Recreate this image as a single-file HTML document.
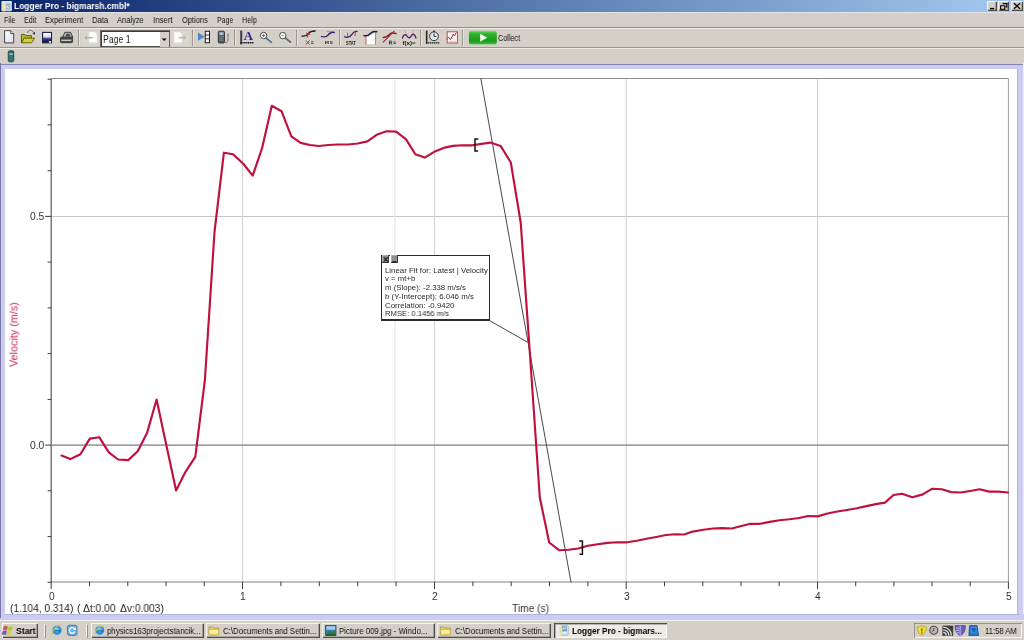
<!DOCTYPE html>
<html><head><meta charset="utf-8"><title>Logger Pro - bigmarsh.cmbl*</title>
<style>
html,body{margin:0;padding:0;overflow:hidden;}
body{width:1024px;height:640px;overflow:hidden;background:#d4d0c8;position:relative;font-family:"Liberation Sans",sans-serif;}
.abs{position:absolute;}
.t{position:absolute;white-space:nowrap;transform-origin:0 50%;line-height:normal;will-change:transform;}
.sep{position:absolute;width:1px;background:#9c988f;box-shadow:1px 0 0 #e6e3dc;}
.tb{position:absolute;top:623px;height:15px;background:#d4d0c8;box-shadow:inset 0.8px 0.8px 0 #fff,inset -0.8px -0.8px 0 #404040,inset -1.6px -1.6px 0 #808080;}
.cb{position:absolute;top:1.3px;height:9.8px;background:#d4d0c8;box-shadow:inset 0.8px 0.8px 0 #fff,inset -0.8px -0.8px 0 #404040,inset -1.6px -1.6px 0 #808080;}
</style></head><body>

<div class="abs" style="left:0;top:0;width:1024px;height:12.4px;background:linear-gradient(90deg,#0a246a,#a6caf0);"></div>
<div class="abs" style="left:0;top:12.4px;width:1024px;height:1.1px;background:#e2e1e6;"></div>
<svg class="abs" style="left:0;top:0" width="14" height="13" viewBox="0 0 14 13"><rect x="1.6" y="1.1" width="10.3" height="10.2" rx="0.8" fill="#c9d9ea"/><rect x="1.6" y="1.1" width="3.6" height="10.2" rx="0.6" fill="#e6e3c2"/><rect x="5.6" y="1.3" width="5.8" height="1.6" fill="#d6ecf8"/><path d="M6 4.2h4.6M6.4 6.2l1.4-1.6 1.4 2.6 1.4-1.2M6 8.8h4" stroke="#8fa3bd" stroke-width="0.9" fill="none"/></svg>
<span class="t" style="left:13.70px;top:-4.00px;font-size:8.9px;line-height:20px;color:#fff;font-weight:bold;transform:scaleX(0.9497);">Logger Pro - bigmarsh.cmbl*</span>
<div class="cb" style="left:987.2px;width:10px;"></div><div class="cb" style="left:997.6px;width:11.6px;"></div><div class="cb" style="left:1011.2px;width:11.4px;"></div>
<svg class="abs" style="left:985px;top:0" width="39" height="13" viewBox="985 0 39 13"><path d="M990 8.6h4.2" stroke="#000" stroke-width="1.4"/><path d="M1002.6 3.6h4.2v3.4h-1.2M1000.6 5.8h4.2v3.4h-4.2z" fill="none" stroke="#000" stroke-width="1.1"/><path d="M1014 3.2l6 5.6M1020 3.2l-6 5.6" stroke="#000" stroke-width="1.3"/></svg>
<span class="t" style="left:3.80px;top:10.00px;font-size:8.7px;line-height:20px;color:#111;transform:scaleX(0.7989);">File</span>
<span class="t" style="left:23.80px;top:10.00px;font-size:8.7px;line-height:20px;color:#111;transform:scaleX(0.8271);">Edit</span>
<span class="t" style="left:44.80px;top:10.00px;font-size:8.7px;line-height:20px;color:#111;transform:scaleX(0.8704);">Experiment</span>
<span class="t" style="left:91.90px;top:10.00px;font-size:8.7px;line-height:20px;color:#111;transform:scaleX(0.8815);">Data</span>
<span class="t" style="left:117.00px;top:10.00px;font-size:8.7px;line-height:20px;color:#111;transform:scaleX(0.8626);">Analyze</span>
<span class="t" style="left:152.90px;top:10.00px;font-size:8.7px;line-height:20px;color:#111;transform:scaleX(0.9008);">Insert</span>
<span class="t" style="left:182.00px;top:10.00px;font-size:8.7px;line-height:20px;color:#111;transform:scaleX(0.8638);">Options</span>
<span class="t" style="left:216.70px;top:10.00px;font-size:8.7px;line-height:20px;color:#111;transform:scaleX(0.8022);">Page</span>
<span class="t" style="left:242.00px;top:10.00px;font-size:8.7px;line-height:20px;color:#111;transform:scaleX(0.8383);">Help</span>
<div class="abs" style="left:0;top:27px;width:1024px;height:1px;background:#8f8b82;"></div><div class="abs" style="left:0;top:28px;width:1024px;height:1px;background:#f2f0ea;"></div>
<div class="abs" style="left:0;top:47px;width:1024px;height:1px;background:#9b978e;"></div><div class="abs" style="left:0;top:48px;width:1024px;height:1px;background:#efede6;"></div>
<div class="sep" style="left:78.0px;top:30px;height:15.6px;"></div>
<div class="sep" style="left:191.8px;top:30px;height:15.6px;"></div>
<div class="sep" style="left:234.0px;top:30px;height:15.6px;"></div>
<div class="sep" style="left:295.9px;top:30px;height:15.6px;"></div>
<div class="sep" style="left:339.4px;top:30px;height:15.6px;"></div>
<div class="sep" style="left:419.9px;top:30px;height:15.6px;"></div>
<div class="sep" style="left:461.8px;top:30px;height:15.6px;"></div>
<div class="abs" style="left:100.3px;top:30px;width:69.6px;height:17.4px;background:#fff;box-shadow:inset 1px 1px 0 #6d6a63,inset -0.9px -0.9px 0 #55524c,inset 2px 2px 0 #3d3b38;"></div>
<div class="abs" style="left:159.7px;top:32px;width:9.2px;height:14.5px;background:#d4d0c8;"></div>
<svg class="abs" style="left:160px;top:36px" width="9" height="6" viewBox="0 0 9 6"><path d="M1.7 2.4h5L4.2 4.9z" fill="#000"/></svg>
<span class="t" style="left:102.90px;top:29.00px;font-size:10.4px;line-height:21px;color:#222;transform:scaleX(0.8343);">Page 1</span>
<span class="t" style="left:498.30px;top:28.00px;font-size:8.7px;line-height:20px;color:#111;transform:scaleX(0.8273);">Collect</span>
<svg class="abs" style="left:0;top:26px" width="540" height="38" viewBox="0 26 540 38"><defs><linearGradient id="gs" x1="0" y1="0" x2="0" y2="1"><stop offset="0" stop-color="#fff"/><stop offset="0.42" stop-color="#dcdcf0"/><stop offset="0.62" stop-color="#3a3a78"/><stop offset="0.85" stop-color="#16164e"/><stop offset="1" stop-color="#101040"/></linearGradient><linearGradient id="gg" x1="0" y1="0" x2="0" y2="1"><stop offset="0" stop-color="#58d058"/><stop offset="0.25" stop-color="#2cb02c"/><stop offset="0.75" stop-color="#1c9a1c"/><stop offset="1" stop-color="#3cbc3c"/></linearGradient><linearGradient id="gd" x1="0" y1="0" x2="1" y2="1"><stop offset="0" stop-color="#fff"/><stop offset="1" stop-color="#d8dcec"/></linearGradient></defs><path d="M4.6 30.7h6.2l2.9 2.9v9.3H4.6z" fill="url(#gd)" stroke="#44444e" stroke-width="1"/><path d="M10.8 30.7v2.9h2.9" fill="#ececec" stroke="#3a3a44" stroke-width="0.9"/><path d="M21.4 42.8v-8.4h3.4l1 1.2h5.6v2.6" fill="#b4b424" stroke="#56560a" stroke-width="0.9"/><path d="M21.4 42.8l2.9-4.6h10.4l-3.2 4.6z" fill="#d2d234" stroke="#56560a" stroke-width="0.9"/><path d="M27.4 32.8c0.9-2.8 3.9-3.6 5.9-0.6" fill="none" stroke="#666" stroke-width="0.9"/><path d="M32.3 33.6l2.7 1.1 0-3z" fill="#333"/><rect x="42.6" y="32.4" width="8.9" height="10.4" fill="url(#gs)" stroke="#1e1e48" stroke-width="1.1"/><rect x="48.9" y="41" width="2.2" height="1.7" fill="#ececf4"/><path d="M62.6 37.6l2.2-5.3h5.8l2.2 5z" fill="#bdbdbd" stroke="#2e2e2e" stroke-width="0.9"/><path d="M65.3 36.2l1-2.5h3.3l1 2.5z" fill="#4e4e4e"/><rect x="60.4" y="37" width="12.2" height="5.7" rx="1.3" fill="#474747" stroke="#262626" stroke-width="0.7"/><rect x="61.2" y="39.7" width="10.2" height="1.1" fill="#e9e9e4"/><rect x="81" y="30.4" width="18" height="15" fill="#d9d6ce"/><path d="M89 32h5.6l2.4 2.4v8.4H89z" fill="#fdfdfd" stroke="#e4e2dc" stroke-width="0.6"/><path d="M84 37.7l2.8-2.2v1.4h6v1.6h-6v1.4z" fill="#b4b1aa"/><rect x="172" y="30.4" width="18" height="15" fill="#d9d6ce"/><path d="M174.2 32h5.4l2.4 2.4v8.4h-7.8z" fill="#fdfdfd" stroke="#e4e2dc" stroke-width="0.6"/><path d="M186.6 37.7l-2.8-2.4v1.5h-5v1.8h5v1.5z" fill="#bebbb4"/><path d="M198 32.6l6.6 4.1-6.6 4.1z" fill="#4a86c8"/><rect x="205.3" y="31.3" width="4.2" height="11.4" fill="#fff" stroke="#1a1a1a" stroke-width="1"/><path d="M205.3 35h4.2M205.3 38.8h4.2" stroke="#1a1a1a" stroke-width="0.9"/><rect x="218.3" y="31.2" width="6.2" height="11.8" rx="1.2" fill="#5a5e64" stroke="#2c2e32" stroke-width="0.9"/><rect x="219.4" y="32.3" width="4" height="2.6" fill="#a8cce4"/><path d="M219.4 36.6h4M219.4 38.4h4M219.4 40.2h4" stroke="#8a8e94" stroke-width="0.7"/><path d="M224.6 42.4c2.4 0.6 3.4-0.4 3.4-2.4v-5.6" fill="none" stroke="#6a6a6a" stroke-width="0.8"/><rect x="227.4" y="33.6" width="1.3" height="2.6" fill="#888"/><path d="M241 30.4v14" stroke="#1a1a2a" stroke-width="1.3"/><path d="M241 32h1.6M241 34h1.6M241 36h1.6M241 38h1.6M241 40h1.6" stroke="#1a1a2a" stroke-width="0.7"/><path d="M240.4 42.8h13.6" stroke="#1a1a2a" stroke-width="1.4" stroke-dasharray="1.4 0.5"/><text x="243.8" y="40.2" font-family="Liberation Serif" font-weight="bold" font-size="12.5" fill="#2c1c86" textLength="9.2" lengthAdjust="spacingAndGlyphs">A</text><path d="M266 38l5.4 4.4" stroke="#4a7a9a" stroke-width="1.8" stroke-linecap="round"/><circle cx="263.6" cy="35.5" r="3.2" fill="#fdf6f6" stroke="#3a3a3a" stroke-width="0.9"/><path d="M262 35.5h3.2M263.6 33.9v3.2" stroke="#b03030" stroke-width="0.8"/><path d="M285.2 38l5.2 4" stroke="#566e7e" stroke-width="1.8" stroke-linecap="round"/><circle cx="282.8" cy="35.6" r="3.2" fill="#f8f8f6" stroke="#3a3a3a" stroke-width="0.9"/><path d="M281.2 35.6h3.2" stroke="#888" stroke-width="0.8"/><path d="M301.6 36c4 0.8 5.4-0.6 7-2.6s3-2.6 7-2.4" fill="none" stroke="#1a1a2a" stroke-width="1.3"/><path d="M309.4 31.2l-2.4 6.4M306.2 33l4 1.6" stroke="#c02040" stroke-width="1"/><path d="M306 40.4l3.6 4.2M309.6 40.4l-3.6 4.2" stroke="#a03040" stroke-width="0.9"/><path d="M311 41.8h2.6M311 43.4h2.6" stroke="#222" stroke-width="0.7"/><path d="M321 36.4c5 1.6 6.4-0.6 8-2.4s3-2.4 5.8-1.4" fill="none" stroke="#242468" stroke-width="1.5"/><path d="M326.6 31.6h7.6" stroke="#d05060" stroke-width="0.6"/><path d="M325.6 44v-2.8l1.3 1.6 1.3-1.6v2.8M330 41.8h2.6M330 43.2h2.6" fill="none" stroke="#222" stroke-width="0.8"/><path d="M344.2 36.6c4.4 1.6 6.4 0 8-2.6s2.6-3 5.4-2.6" fill="none" stroke="#2a2468" stroke-width="1.4"/><path d="M347.6 32.6v3.4M354.6 32.4c1.2-0.6 1.6 0.6 0.6 1.6l-0.8 1.2h1.6" fill="none" stroke="#c03040" stroke-width="0.8"/><text x="346" y="44.6" font-size="5" font-weight="bold" fill="#222" textLength="9.8" lengthAdjust="spacingAndGlyphs" font-family="Liberation Sans">STAT</text><rect x="364.6" y="33" width="12" height="11.8" fill="#e8c8c8" opacity="0.6"/><path d="M366.8 37.4l8-4.4v11h-8z" fill="#fff"/><path d="M365.8 36v8.8M375.6 32v12.8" stroke="#c87878" stroke-width="1"/><path d="M363.4 35.6c4 1 5.6-0.6 7-2.2s3.2-2.6 7-1.6" fill="none" stroke="#1e2240" stroke-width="1.5"/><path d="M382.6 37.6c4-0.2 5.6-1.8 7-3.4s3.4-1.6 7-0.6" fill="none" stroke="#8a2030" stroke-width="1.3"/><path d="M383 42.4l11.4-11.6" stroke="#a02838" stroke-width="1.2"/><path d="M389.4 44.6v-3.6h1.6c1.2 0 1.2 1.8 0 1.8h-1.6m1.4 0l1.2 1.8M393.4 42h2.4M393.4 43.4h2.4" fill="none" stroke="#222" stroke-width="0.8"/><path d="M405.4 30.6c0.6 5 1.8 7.4 3.8 7.4s3.4-2.4 3.8-7.4" fill="#e6ccd2" fill-opacity="0.55" stroke="#d49aa8" stroke-width="0.8"/><path d="M402.2 38.4c1.4-3.6 3-4.8 4.6-2.6s3 3 4.4 0.2 3.2-2.6 5 2.4" fill="none" stroke="#5a2c6c" stroke-width="1.4"/><text x="402.4" y="44.6" font-size="5" font-weight="bold" fill="#222" textLength="13.4" lengthAdjust="spacingAndGlyphs" font-family="Liberation Sans">f(x)=</text><path d="M426.8 30.4v13.4" stroke="#1a1a1a" stroke-width="1.2"/><path d="M425.6 32h1.6M425.6 34h1.6M425.6 36h1.6M425.6 38h1.6M425.6 40h1.6" stroke="#1a1a1a" stroke-width="0.7"/><path d="M425.8 42.8h14" stroke="#1a1a1a" stroke-width="1.3" stroke-dasharray="1.5 0.5"/><circle cx="434" cy="36.3" r="4.4" fill="#dce8f4" stroke="#333" stroke-width="1"/><path d="M434 33.4v3h2.4" fill="none" stroke="#222" stroke-width="0.9"/><rect x="433" y="30.6" width="2" height="1.4" fill="#333"/><rect x="447.2" y="31.8" width="10.2" height="11.2" fill="#fbf4f2" stroke="#b04a44" stroke-width="0.9"/><path d="M446.4 39.6l2.4-2.4 1.6 2.4 3-5.6 1 2 2-3.6" fill="none" stroke="#c0302c" stroke-width="1"/><path d="M449 41.6h7" stroke="#d8a8a4" stroke-width="0.6"/><rect x="468.4" y="30.8" width="28.8" height="13.8" rx="2.2" fill="#9ad89a" opacity="0.55"/><rect x="469" y="31.3" width="27.8" height="12.9" rx="1.8" fill="url(#gg)"/><path d="M480.2 33.8l7 4-7 4z" fill="#fff" opacity="0.95"/><rect x="8.2" y="50.8" width="5.6" height="11" rx="1.4" fill="#2e6e66" stroke="#1c4a44" stroke-width="0.8"/><rect x="9.2" y="53.4" width="3.6" height="1.3" fill="#b4dcd4"/><path d="M9.2 56.2h3.6M9.2 58h3.6M9.2 59.8h3.6" stroke="#4a8a82" stroke-width="0.6"/></svg>
<div class="abs" style="left:0;top:63.9px;width:1024px;height:554.7px;background:#cbcbf4;"></div>
<div class="abs" style="left:0;top:63.9px;width:1024px;height:1.6px;background:linear-gradient(#6f6f98,#9a9ac4);"></div>
<div class="abs" style="left:0;top:63.4px;width:1.3px;height:555px;background:#77779e;"></div>
<div class="abs" style="left:4.6px;top:68.8px;width:1012.8px;height:544.9px;background:#fff;"></div>
<div class="abs" style="left:1017.3px;top:68.8px;width:1.2px;height:546px;background:#b2b2de;"></div>
<div class="abs" style="left:1022.9px;top:63.4px;width:1.1px;height:555px;background:#f4f4fc;"></div>
<svg class="abs" style="left:0;top:0" width="1024" height="640" viewBox="0 0 1024 640">
<line x1="51.25" y1="216.5" x2="1008.4" y2="216.5" stroke="#c8c8c8" stroke-width="1"/>
<line x1="242.5" y1="78.5" x2="242.5" y2="582.0" stroke="#d2d2d2" stroke-width="1"/>
<line x1="434.5" y1="78.5" x2="434.5" y2="582.0" stroke="#d2d2d2" stroke-width="1"/>
<line x1="626.2" y1="78.5" x2="626.2" y2="582.0" stroke="#d2d2d2" stroke-width="1"/>
<line x1="817.5" y1="78.5" x2="817.5" y2="582.0" stroke="#d2d2d2" stroke-width="1"/>
<line x1="394.9" y1="78.5" x2="394.9" y2="582.0" stroke="#e2e2e2" stroke-width="1"/>
<line x1="51.25" y1="445.1" x2="1008.4" y2="445.1" stroke="#7c7c7c" stroke-width="1.3"/>
<path d="M51.25 78.5H1008.4" fill="none" stroke="#8c8c8c" stroke-width="1"/>
<path d="M1008.4 78.5V582.0" fill="none" stroke="#9c9c9c" stroke-width="1"/>
<path d="M51.25 582.0H1008.4" fill="none" stroke="#ababab" stroke-width="1.5"/>
<path d="M51.25 78.5V582.5" fill="none" stroke="#7a7a7a" stroke-width="1.5"/>
<path d="M47.6 582.3H51.25M47.6 536.6H51.25M47.6 490.8H51.25M45.2 445.1H51.25M47.6 399.4H51.25M47.6 353.6H51.25M47.6 307.9H51.25M47.6 262.1H51.25M45.2 216.4H51.25M47.6 170.7H51.25M47.6 124.9H51.25M47.6 79.2H51.25M51.2 581.7V589.0M89.5 581.7V586.2M127.8 581.7V586.2M166.0 581.7V586.2M204.2 581.7V586.2M242.5 581.7V589.0M280.9 581.7V586.2M319.3 581.7V586.2M357.7 581.7V586.2M396.1 581.7V586.2M434.5 581.7V589.0M472.9 581.7V586.2M511.2 581.7V586.2M549.5 581.7V586.2M587.9 581.7V586.2M626.2 581.7V589.0M664.5 581.7V586.2M702.8 581.7V586.2M741.0 581.7V586.2M779.2 581.7V586.2M817.5 581.7V589.0M855.7 581.7V586.2M893.9 581.7V586.2M932.0 581.7V586.2M970.2 581.7V586.2M1008.4 581.7V589.0" fill="none" stroke="#3c3c3c" stroke-width="1"/>
<line x1="480.8" y1="78.3" x2="571" y2="582.4" stroke="#333" stroke-width="0.9"/>
<polyline fill="none" stroke="#bf103e" stroke-width="2.15" stroke-linejoin="round" stroke-linecap="round" points="61.5,455.6 70.3,459.1 80.4,454.2 89.8,438.6 99.2,437.2 108.8,452.3 118.1,459.5 128.3,460.1 137.7,451.3 147,433.1 156.6,399.5 166.3,445 176.1,490.4 185.5,471.8 195.3,456.8 204.9,380 214.5,232 223.9,152.7 233.1,154.2 243.5,164 252.7,175.7 262,148.4 271.8,105.8 281.6,111.3 291.3,136.3 300.7,142.9 309.9,145 318.7,146 328.4,145 338.2,144.5 348,144.5 357.7,143.5 367.4,141.4 376.6,134.8 386.4,131.3 396.1,131.6 405.9,139.1 415.3,154.3 424.8,157.6 434.2,151.8 443.6,147.9 452.8,145.9 462.5,145.3 472.3,145.3 481.5,143.9 490.5,142.6 500.6,145.9 510.8,162.5 520.7,222.5 530,355 539.8,497.5 549.2,542.5 559,550.2 568.4,549.7 578.1,548.5 587.9,545.8 597.7,544.2 607.4,542.9 617.2,542.3 627,542.3 636.7,540.7 646.5,538.8 656.3,537 666,535 675.5,534.2 684.2,534.5 692.7,531.6 703.4,529.7 713.2,528.5 722,528.1 731.8,528.5 740.5,526.2 750.3,523.8 760.1,523.8 769.8,521.9 779.6,520.3 789.4,519.3 799.1,518 807.9,516 817.7,516.4 827.5,513.5 837.2,511.5 847,510 856.8,508.3 866.5,506.1 875.9,504.1 885,502.6 893.5,495 902,493.8 912.4,497.3 922.8,494.4 932.3,488.7 941.8,489.3 951.3,492.1 960.7,492.5 970.2,491 979.7,489.3 989.2,491.6 998.6,491.6 1008.1,492.5"/>
<path d="M478.3 139H475V151.1H478.1" fill="none" stroke="#111" stroke-width="1.5"/>
<path d="M579.2 541H582.4V554.2H579.4" fill="none" stroke="#111" stroke-width="1.5"/>
<line x1="489" y1="320.3" x2="527.7" y2="342.3" stroke="#333" stroke-width="0.9"/>
</svg>
<span class="t" style="left:30.00px;top:206.00px;font-size:10.3px;line-height:21px;color:#333;transform:scaleX(0.9847);">0.5</span>
<span class="t" style="left:30.00px;top:435.00px;font-size:10.3px;line-height:21px;color:#333;transform:scaleX(0.9847);">0.0</span>
<span class="t" style="left:48.61px;top:586.00px;font-size:10.2px;line-height:21px;color:#333;">0</span>
<span class="t" style="left:239.86px;top:586.00px;font-size:10.2px;line-height:21px;color:#333;">1</span>
<span class="t" style="left:431.86px;top:586.00px;font-size:10.2px;line-height:21px;color:#333;">2</span>
<span class="t" style="left:623.61px;top:586.00px;font-size:10.2px;line-height:21px;color:#333;">3</span>
<span class="t" style="left:814.86px;top:586.00px;font-size:10.2px;line-height:21px;color:#333;">4</span>
<span class="t" style="left:1005.76px;top:586.00px;font-size:10.2px;line-height:21px;color:#333;">5</span>
<span class="t" style="left:511.50px;top:598.00px;font-size:10.4px;line-height:21px;color:#333;transform:scaleX(0.9830);">Time (s)</span>
<span class="t" style="left:9.70px;top:598.00px;font-size:10.5px;line-height:20px;color:#222;transform:scaleX(0.9682);">(1.104, 0.314)</span>
<span class="t" style="left:76.60px;top:598.00px;font-size:10.5px;line-height:20px;color:#222;">(</span>
<span class="t" style="left:82.60px;top:598.00px;font-size:10.5px;line-height:20px;color:#222;transform:scaleX(0.9764);">Δt:0.00</span>
<span class="t" style="left:120.40px;top:598.00px;font-size:10.5px;line-height:20px;color:#222;transform:scaleX(0.9766);">Δv:0.003)</span>
<span class="t" style="left:-15.81px;top:328.75px;font-size:10px;color:#cc2257;transform-origin:50% 50%;transform:rotate(-90deg) scaleX(1.0782);">Velocity (m/s)</span>
<div class="abs" style="left:381.3px;top:255px;width:108.4px;height:65.8px;background:#fff;border:1.2px solid #2a2a2a;border-right-width:1.9px;border-bottom-width:2px;box-sizing:border-box;"></div>
<div class="abs" style="left:382.3px;top:255.3px;width:7.2px;height:8.1px;background:#8e8e8e;box-shadow:inset -1px -1px 0 #3a3a3a,inset 0.6px 0.6px 0 #c8c8c8;"></div>
<div class="abs" style="left:389.5px;top:255px;width:1.5px;height:8.4px;background:#fff;"></div>
<div class="abs" style="left:391px;top:255.3px;width:6.9px;height:8.1px;background:#8e8e8e;box-shadow:inset -1px -1px 0 #3a3a3a,inset 0.6px 0.6px 0 #c8c8c8;"></div>
<svg class="abs" style="left:382px;top:255px" width="18" height="9" viewBox="0 0 18 9"><path d="M1.8 2.4l4 4.2M5.8 2.4l-4 4.2" stroke="#1a1a1a" stroke-width="1.1"/><path d="M10.4 6.8h4" stroke="#1a1a1a" stroke-width="1.3"/></svg>
<span class="t" style="left:385.00px;top:260.00px;font-size:7.7px;line-height:21px;color:#2a2a2a;transform:scaleX(1.0169);">Linear Fit for: Latest | Velocity</span>
<span class="t" style="left:385.00px;top:268.00px;font-size:7.7px;line-height:21px;color:#2a2a2a;transform:scaleX(1.0114);">v = mt+b</span>
<span class="t" style="left:385.00px;top:277.00px;font-size:7.7px;line-height:21px;color:#2a2a2a;transform:scaleX(1.0123);">m (Slope): -2.338 m/s/s</span>
<span class="t" style="left:385.00px;top:286.00px;font-size:7.7px;line-height:21px;color:#2a2a2a;transform:scaleX(1.0278);">b (Y-Intercept): 6.046 m/s</span>
<span class="t" style="left:385.00px;top:295.00px;font-size:7.7px;line-height:21px;color:#2a2a2a;transform:scaleX(1.0212);">Correlation: -0.9420</span>
<span class="t" style="left:385.00px;top:303.00px;font-size:7.7px;line-height:21px;color:#2a2a2a;transform:scaleX(0.9904);">RMSE: 0.1456 m/s</span>
<div class="abs" style="left:1.3px;top:613.5px;width:1022.7px;height:5.2px;background:#cbcbf4;"></div>
<div class="abs" style="left:4.6px;top:613.5px;width:1014px;height:1.2px;background:#b4b4e0;"></div>
<div class="abs" style="left:0;top:618.6px;width:1024px;height:21.4px;background:#d4d0c8;"></div>
<div class="abs" style="left:0;top:620px;width:1024px;height:1px;background:#f3f2ee;"></div>
<div class="tb" style="left:1.6px;width:36.8px;"></div>
<span class="t" style="left:16.00px;top:621.00px;font-size:8.9px;line-height:20px;color:#000;font-weight:bold;transform:scaleX(0.9666);">Start</span>
<div class="abs" style="left:43.6px;top:623.5px;width:1.6px;height:13.5px;background:#f4f2ec;box-shadow:0.8px 0.8px 0 #87837b;"></div>
<div class="abs" style="left:85.5px;top:623.5px;width:1.6px;height:13.5px;background:#f4f2ec;box-shadow:0.8px 0.8px 0 #87837b;"></div>
<div class="tb" style="left:90.6px;width:113.6px;"></div>
<span class="t" style="left:106.90px;top:621.00px;font-size:8.7px;line-height:20px;color:#111;transform:scaleX(0.9012);">physics163projectstancik...</span>
<div class="tb" style="left:206.1px;width:113.6px;"></div>
<span class="t" style="left:222.75px;top:621.00px;font-size:8.7px;line-height:20px;color:#111;transform:scaleX(0.8993);">C:\Documents and Settin...</span>
<div class="tb" style="left:321.6px;width:113.6px;"></div>
<span class="t" style="left:338.75px;top:621.00px;font-size:8.7px;line-height:20px;color:#111;transform:scaleX(0.9060);">Picture 009.jpg - Windo...</span>
<div class="tb" style="left:437.4px;width:113.6px;"></div>
<span class="t" style="left:454.75px;top:621.00px;font-size:8.7px;line-height:20px;color:#111;transform:scaleX(0.8993);">C:\Documents and Settin...</span>
<div class="abs" style="left:553.8px;top:622.8px;width:113.4px;height:14.8px;background:#ecebe6;box-shadow:inset 0.8px 0.8px 0 #404040,inset 1.6px 1.6px 0 #808080,inset -0.8px -0.8px 0 #fff;"></div>
<span class="t" style="left:571.50px;top:621.00px;font-size:8.9px;line-height:20px;color:#000;font-weight:bold;transform:scaleX(0.9239);">Logger Pro - bigmars...</span>
<div class="abs" style="left:914px;top:623px;width:107.6px;height:14.6px;box-shadow:inset 0.8px 0.8px 0 #87837b,inset -0.8px -0.8px 0 #fff;"></div>
<span class="t" style="left:984.50px;top:621.00px;font-size:8.7px;line-height:20px;color:#111;transform:scaleX(0.8806);">11:58 AM</span>
<svg class="abs" style="left:0;top:618px" width="1024" height="22" viewBox="0 618 1024 22"><path d="M3.6 626.6c1.4-1 2.8-1 4.2-0.2l-0.8 4c-1.4-0.8-2.8-0.8-4.2 0.2z" fill="#c85a50"/><path d="M8.4 626.2c1.4 0.8 2.8 0.8 4.4-0.2l-0.8 4c-1.6 1-3 1-4.4 0.2z" fill="#b8c838"/><path d="M2.6 631.2c1.4-1 2.8-1 4.2-0.2l-0.8 4c-1.4-0.8-2.8-0.8-4.2 0.2z" fill="#6a5cc0"/><path d="M7.4 630.8c1.4 0.8 2.8 0.8 4.4-0.2l-0.8 4c-1.6 1-3 1-4.4 0.2z" fill="#d8cc40"/><circle cx="57" cy="630.3" r="4.7" fill="#2f93da"/><circle cx="56.7" cy="629.9" r="2.35" fill="#7cc4ee"/><path d="M54.18 630.8h6.58" stroke="#1a6cb0" stroke-width="1.3"/><path d="M51.699999999999996 634.53c1.41 -6.58 6.11 -9.4 9.4 -8.93" fill="none" stroke="#c8c83c" stroke-width="1.1"/><rect x="67.4" y="625.2" width="9.6" height="10.2" rx="2" fill="#6aaede" stroke="#3a6a8e" stroke-width="0.8"/><path d="M74.6 629a2.8 2.8 0 1 0 0.2 2.6" fill="none" stroke="#fff" stroke-width="1.3"/><path d="M75.8 627.4v2.6h-2.6z" fill="#fff"/><circle cx="99.8" cy="630.4" r="4.5" fill="#2f93da"/><circle cx="99.5" cy="630.0" r="2.25" fill="#7cc4ee"/><path d="M97.1 630.9h6.3" stroke="#1a6cb0" stroke-width="1.3"/><path d="M94.7 634.4499999999999c1.3499999999999999 -6.3 5.8500000000000005 -9.0 9.0 -8.549999999999999" fill="none" stroke="#c8c83c" stroke-width="1.1"/><path d="M209 634.8v-8h3.2l1 1.2h5.4v6.8z" fill="#e8d060" stroke="#a89030" stroke-width="0.7"/><path d="M209 634.8v-5.4h9.6v5.4z" fill="#f8ec9c" stroke="#b8a040" stroke-width="0.6"/><path d="M440.6 634.8v-8h3.2l1 1.2h5.4v6.8z" fill="#e8d060" stroke="#a89030" stroke-width="0.7"/><path d="M440.6 634.8v-5.4h9.6v5.4z" fill="#f8ec9c" stroke="#b8a040" stroke-width="0.6"/><rect x="325.6" y="625.4" width="10.4" height="10" fill="#3a7ab8" stroke="#2a4a6a" stroke-width="0.8"/><rect x="326.4" y="626.2" width="8.8" height="3.6" fill="#9cd0ec"/><path d="M326 635l3.4-4.4 2.6 2 2-1.6 2 2.2v1.8z" fill="#2c7a34"/><path d="M326 635h10" stroke="#1c3a1c" stroke-width="0.8"/><rect x="560.4" y="625.2" width="7.8" height="10" rx="1" fill="#dce8ec" stroke="#8aa0a8" stroke-width="0.7"/><rect x="562" y="626.4" width="4.8" height="5" fill="#6aa0cc"/><path d="M562.4 630l1.2-2.4 1.2 1.6 1.2-1.8" stroke="#fff" stroke-width="0.7" fill="none"/><rect x="560" y="625" width="1.8" height="10" fill="#e8e0a0"/><path d="M921.8 625.4c1.6 1.2 3 1.4 4.6 1.4 0 4-1 6.6-4.6 8.6-3.6-2-4.6-4.6-4.6-8.6 1.6 0 3-0.2 4.6-1.4z" fill="#f0dc38" stroke="#a89820" stroke-width="0.7"/><path d="M921.8 628.4v3.2" stroke="#5a5010" stroke-width="1.2"/><circle cx="921.8" cy="633" r="0.7" fill="#5a5010"/><circle cx="933.8" cy="630.2" r="4" fill="#b8b8b8" stroke="#4a4a4a" stroke-width="1.1"/><path d="M933.8 628v2.4l-1.6 1" stroke="#333" stroke-width="0.9" fill="none"/><rect x="942.4" y="625.6" width="10.8" height="10.2" fill="#3c3c3c"/><path d="M943.2 632.4a3 3 0 0 1 3 3M943.2 629.8a5.6 5.6 0 0 1 5.6 5.6M943.2 627.2a8.2 8.2 0 0 1 8.2 8.2" fill="none" stroke="#e4e4e4" stroke-width="1.3"/><path d="M955 625.6h10.4c0 5-1.2 8-5.2 10.2-4-2.2-5.2-5.2-5.2-10.2z" fill="#6a60c8" stroke="#3a3090" stroke-width="0.6"/><path d="M960.2 625.6v10.2" stroke="#c8c4f0" stroke-width="0.9"/><path d="M956 628h3.4M956 630.4h3.4M956.6 632.8h2.8" stroke="#d8d4f8" stroke-width="0.8"/><path d="M969.6 625.6h7.4l1.6 9.8h-9.8z" fill="#2a7ad0" stroke="#124a90" stroke-width="0.8"/><rect x="971.4" y="627.4" width="4.6" height="4.6" fill="#1860b8" stroke="#6ab0f0" stroke-width="0.5"/></svg>
</body></html>
